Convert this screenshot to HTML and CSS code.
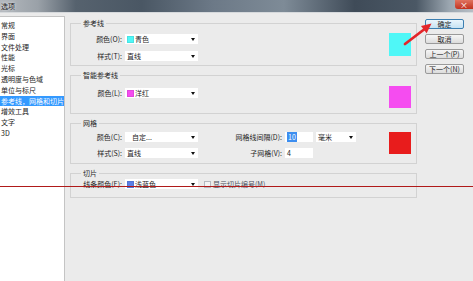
FILE: index.html
```html
<!DOCTYPE html>
<html lang="zh-CN">
<head>
  <meta charset="UTF-8" />
  <title>选项</title>
  <link rel="stylesheet" href="styles.css">
</head>
<body>
  <div class="titlebar">
    <span class="title">选项</span>
    <span class="close">×</span>
  </div>

  <div class="main">
    <ul class="nav">
      <li>常规</li>
      <li>界面</li>
      <li>文件处理</li>
      <li>性能</li>
      <li>光标</li>
      <li>透明度与色域</li>
      <li>单位与标尺</li>
      <li class="active">参考线，网格和切片</li>
      <li>增效工具</li>
      <li>文字</li>
      <li>3D</li>
    </ul>

    <div class="panel">
      <div class="group g-guides">
        <div class="group-title">参考线</div>
        <div class="group-body">
          <div class="fields">
            <label>颜色(O):</label>
            <div class="select"><i class="chip" style="background:#4ff7f7"></i>青色<b></b></div>
            <label>样式(T):</label>
            <div class="select">直线<b></b></div>
          </div>
          <div class="swatch" style="background:#4ff7f7"></div>
        </div>
      </div>

      <div class="group g-smart">
        <div class="group-title">智能参考线</div>
        <div class="group-body">
          <div class="fields">
            <label>颜色(L):</label>
            <div class="select"><i class="chip" style="background:#f54cf0"></i>洋红<b></b></div>
          </div>
          <div class="swatch" style="background:#f54cf0"></div>
        </div>
      </div>

      <div class="group g-grid">
        <div class="group-title">网格</div>
        <div class="group-body">
          <div class="fields wide">
            <label>颜色(C):</label>
            <div class="select custom">自定...<b></b></div>
            <label>网格线间隔(D):</label>
            <div class="input"><span class="sel">10</span></div>
            <div class="select">毫米<b></b></div>
            <label>样式(S):</label>
            <div class="select">直线<b></b></div>
            <label>子网格(V):</label>
            <div class="input">4</div>
          </div>
          <div class="swatch" style="background:#e81c1c"></div>
        </div>
      </div>

      <div class="group g-slices">
        <div class="group-title">切片</div>
        <div class="group-body">
          <div class="fields">
            <label>线条颜色(E):</label>
            <div class="select"><i class="chip" style="background:#5a7fe6"></i>浅蓝色<b></b></div>
          </div>
          <div class="check"><i></i>显示切片编号(M)</div>
        </div>
      </div>
    </div>

    <div class="actions">
      <button class="default">确定</button>
      <button>取消</button>
      <button>上一个(P)</button>
      <button>下一个(N)</button>
    </div>
  </div>

  <svg class="marks" width="473" height="281" viewBox="0 0 473 281">
    <line x1="0" y1="186.5" x2="473" y2="186.5" stroke="#b01a1a" stroke-width="1" />
    <line x1="405" y1="44" x2="424" y2="29.5" stroke="#e3262a" stroke-width="2.8" stroke-linecap="round" />
    <polygon points="431.5,23.5 426.6,33.2 421,26" fill="#e3262a" />
  </svg>
</body>
</html>
```

FILE: styles.css
```css
body {
  margin: 0;
  width: 473px;
  height: 281px;
  overflow: hidden;
  position: relative;
  background: #ebebeb;
  color: #1e1e1e;
  font-family: "Noto Sans CJK SC", "Noto Sans", sans-serif;
  font-size: 7px;
}
.titlebar {
  height: 12px;
  display: flex;
  align-items: center;
  background: linear-gradient(to right, #b4b9be 0%, #9aa1a8 8%, #56626e 16%, #4a5764 30%, #6c7987 45%, #7e8b97 60%, #3f4b58 75%, #4b5865 88%, #9ba6b0 95%, #b7bec5 100%);
  border-bottom: 1px solid #d6d9dc;
}
.title {
  padding-left: 1px;
  color: #1b1b1b;
  text-shadow: 0 0 3px #fff;
}
.close {
  margin-left: auto;
  align-self: flex-start;
  width: 18px;
  height: 9px;
  line-height: 9px;
  text-align: center;
  color: #fff;
  font-size: 8px;
  background: linear-gradient(#e0735f, #c2321f);
  border-radius: 0 0 0 3px;
}
.main {
  display: flex;
  height: 268px;
}
.nav {
  list-style: none;
  margin: 3px 0 0;
  padding: 3px 0 0;
  width: 64px;
  background: #fff;
  border-top: 1px solid #c4c4c4;
  border-right: 1px solid #c4c4c4;
}
.nav li {
  height: 10.8px;
  line-height: 10.8px;
  padding-left: 1px;
  white-space: nowrap;
  overflow: hidden;
}
.nav li.active {
  background: #3399ff;
  color: #fff;
}
.panel {
  width: 347px;
  padding: 10px 0 0 5px;
}
.group {
  border: 1px solid #d2d2d2;
  margin-bottom: 9px;
  box-sizing: border-box;
}
.group-title {
  width: max-content;
  margin: -6px 0 0 10px;
  padding: 0 2px;
  line-height: 10px;
  background: #ebebeb;
}
.group-body {
  display: flex;
  align-items: flex-start;
  padding-right: 5px;
}
.g-guides { height: 43px; }
.g-smart { height: 39px; }
.g-grid { height: 41px; }
.g-slices { height: 25px; }
.fields {
  display: grid;
  grid-template-columns: 51px 73px;
  column-gap: 3px;
  row-gap: 7px;
  align-items: center;
}
.fields.wide {
  grid-template-columns: 51px 73px 81px 28px 40px;
  row-gap: 6px;
}
.fields label {
  text-align: right;
  white-space: nowrap;
}
.select {
  height: 10px;
  display: flex;
  align-items: center;
  background: #fff;
  padding-left: 2px;
  white-space: nowrap;
}
.select.custom {
  padding-left: 7px;
}
.select b {
  margin: 0 3px 0 auto;
  border-left: 2px solid transparent;
  border-right: 2px solid transparent;
  border-top: 3px solid #111;
}
.chip {
  width: 7px;
  height: 7px;
  margin-right: 1px;
  box-sizing: border-box;
  border: 1px solid rgba(0, 0, 0, 0.08);
}
.input {
  height: 10px;
  line-height: 10px;
  background: #fff;
  padding-left: 2px;
}
.input .sel {
  background: #3d8ef0;
  color: #fff;
  padding: 0 1px;
}
.swatch {
  margin-left: auto;
  width: 22px;
  height: 23px;
}
.g-guides .fields { margin-top: 6px; }
.g-guides .swatch { margin-top: 5px; }
.g-smart .fields { margin-top: 8px; }
.g-smart .swatch { margin-top: 6px; height: 22px; }
.g-grid .fields { margin-top: 4px; }
.g-grid .swatch { margin-top: 4px; height: 22px; }
.g-slices .fields { margin-top: 1px; }
.check {
  display: flex;
  align-items: center;
  margin: 1px 0 0 6px;
  height: 10px;
  color: #4a4f5a;
}
.check i {
  width: 7px;
  height: 7px;
  margin-right: 2px;
  box-sizing: border-box;
  border: 1px solid #b5b9c0;
  background: #f4f4f4;
}
.actions {
  display: flex;
  flex-direction: column;
  gap: 5px;
  padding: 6px 0 0 8px;
}
.actions button {
  width: 39px;
  height: 10px;
  padding: 0;
  font-family: inherit;
  font-size: 7px;
  line-height: 8px;
  color: #1e1e1e;
  background: linear-gradient(#f6f6f6, #dcdcdc);
  border: 1px solid #9a9a9a;
  border-radius: 2px;
}
.actions button.default {
  background: linear-gradient(#eaf5fc, #c6e2f3);
  border-color: #3c7fb1;
}
.marks {
  position: absolute;
  left: 0;
  top: 0;
  pointer-events: none;
}
```
